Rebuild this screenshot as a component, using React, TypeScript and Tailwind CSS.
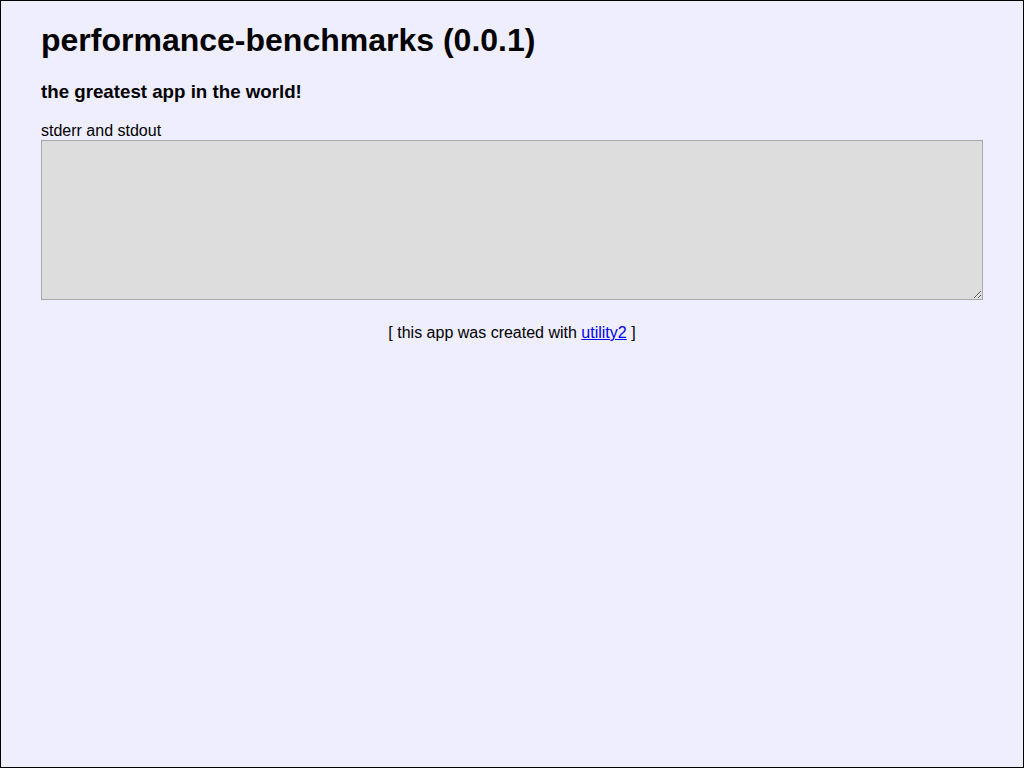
export default function App() {
  return (
    <div className="h-[768px] border border-black bg-[#eeeeff] px-10 font-['Liberation_Sans',Arial,sans-serif] text-black">
      {/* header */}
      <h1 className="pt-[21px] text-[32px] font-bold leading-[37px]">
        performance-benchmarks (0.0.1)
      </h1>
      <h3 className="mt-[22px] text-[18.72px] font-bold leading-[22px]">
        the greatest app in the world!
      </h3>

      {/* output */}
      <label className="mt-[19px] block text-base leading-[18px]">stderr and stdout</label>
      <textarea
        readOnly
        className="block h-[160px] w-full border border-[#a9a9a9] bg-[#dddddd] p-0.5 font-['Liberation_Mono',monospace] text-[13px]"
      />

      <div className="mt-[24px] text-center text-base leading-[18px]">
        [ this app was created with{' '}
        <a href="#" className="text-[#0000ee] underline">
          utility2
        </a>{' '}
        ]
      </div>
    </div>
  )
}
